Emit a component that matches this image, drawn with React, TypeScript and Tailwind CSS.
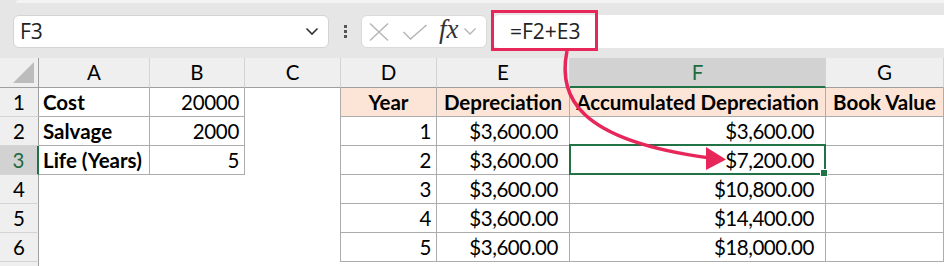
import React from 'react';

const COLS = ['A', 'B', 'C', 'D', 'E', 'F', 'G'];

type Cell = { text?: string; cls?: string };

const cellFont = { fontFamily: 'Lato, "Open Sans", sans-serif' };

function Toolbar() {
  return (
    <div className="relative h-[58px] bg-[#e6e6e6] flex items-start pt-[15px]">
      <div className="absolute left-[16px] right-0 top-0 h-[3px] rounded-tl-[6px] bg-[#f3f3f3]" />
      <div className="ml-[13px] w-[316px] h-[33px] rounded-[6px] bg-white border border-[#d4d4d4] flex items-center pl-[6px] pr-[8px]">
        <span className="flex-1 text-[21px] text-[#222]" style={{ fontFamily: '"Open Sans", "Noto Sans", sans-serif' }}>F3</span>
        <svg width="14" height="9" viewBox="0 0 14 9" className="mr-[1px]">
          <path d="M1.5 1.5 L7 7 L12.5 1.5" fill="none" stroke="#333" strokeWidth="1.6" />
        </svg>
      </div>
      <div className="w-[32px] h-[33px] flex flex-col items-center justify-center gap-[2px]">
        <span className="w-[3px] h-[3px] bg-[#555]" />
        <span className="w-[3px] h-[3px] bg-[#555]" />
        <span className="w-[3px] h-[3px] bg-[#555]" />
      </div>
      <div className="w-[126px] h-[33px] rounded-[6px] bg-white border border-[#dadada] flex items-center pl-[6px]">
        <svg width="22" height="20" viewBox="0 0 22 20">
          <path d="M2 1.5 L20 18.5 M20 1.5 L2 18.5" stroke="#b4b4b4" strokeWidth="1.4" fill="none" />
        </svg>
        <svg width="26" height="16" viewBox="0 0 26 16" className="ml-[12px]">
          <path d="M1.5 8 L8.5 15 L24.5 1" stroke="#b4b4b4" strokeWidth="1.4" fill="none" />
        </svg>
        <span className="ml-[11px] text-[27px] italic text-[#333] leading-none -mt-[4px]" style={{ fontFamily: '"Liberation Serif", serif' }}>fx</span>
        <svg width="14" height="9" viewBox="0 0 14 9" className="ml-[4px]">
          <path d="M1.5 1.5 L7 7 L12.5 1.5" fill="none" stroke="#b4b4b4" strokeWidth="1.4" />
        </svg>
      </div>
      <div className="ml-[6px] flex-1 h-[33px] rounded-l-[6px] bg-white flex items-center pl-[17px]">
        <span className="text-[21px] text-[#222]" style={{ fontFamily: '"Open Sans", "Noto Sans", sans-serif' }}>=F2+E3</span>
      </div>
    </div>
  );
}

const B = 'border-[#acacac]';

function buildRows(): Cell[][] {
  const tb = `border-r border-b ${B}`;
  const hdr = `${tb} bg-[#fce4d6] font-bold justify-center`;
  const num = `${tb} justify-end pr-[5px] tracking-[-0.3px]`;
  const cur = `${tb} justify-end pr-[11px] tracking-[-0.45px]`;
  const cLeft = `border-r ${B}`;
  const rows: Cell[][] = [
    [
      { text: 'Cost', cls: `${tb} font-bold pl-[4px]` },
      { text: '20000', cls: num },
      { cls: cLeft },
      { text: 'Year', cls: hdr },
      { text: 'Depreciation', cls: hdr },
      { text: 'Accumulated Depreciation', cls: hdr },
      { text: 'Book Value', cls: hdr },
    ],
    [
      { text: 'Salvage', cls: `${tb} font-bold pl-[4px]` },
      { text: '2000', cls: num },
      { cls: cLeft },
      { text: '1', cls: num },
      { text: '$3,600.00', cls: cur },
      { text: '$3,600.00', cls: cur },
      { cls: tb },
    ],
    [
      { text: 'Life (Years)', cls: `${tb} font-bold pl-[4px]` },
      { text: '5', cls: num },
      { cls: cLeft },
      { text: '2', cls: num },
      { text: '$3,600.00', cls: cur },
      { text: '$7,200.00', cls: `${cur} relative` },
      { cls: tb },
    ],
  ];
  const rest = [
    ['3', '$10,800.00'],
    ['4', '$14,400.00'],
    ['5', '$18,000.00'],
  ];
  rest.forEach(([y, acc]) => {
    rows.push([
      {},
      {},
      { cls: cLeft },
      { text: y, cls: num },
      { text: '$3,600.00', cls: cur },
      { text: acc, cls: cur },
      { cls: tb },
    ]);
  });
  return rows;
}

function Sheet() {
  const rows = buildRows();
  return (
    <div
      className="grid grid-cols-[39px_111px_95px_96px_96px_133px_256px_118px] text-[20.5px] text-black"
      style={cellFont}
    >
      {/* header row */}
      <div className="h-[30px] bg-[#efefef] border-r border-b border-[#9e9e9e] relative">
        <svg width="22" height="22" viewBox="0 0 22 22" className="absolute right-[3px] bottom-[3px]">
          <path d="M21 0 L21 21 L0 21 Z" fill="#bcbcbc" />
        </svg>
      </div>
      {COLS.map((c) =>
        c === 'F' ? (
          <div
            key={c}
            className="h-[30px] bg-[#d2d2d2] border-r border-[#d4d4d4] border-b-2 border-b-[#217346] flex items-center justify-center text-[#1e6b41]"
          >
            {c}
          </div>
        ) : (
          <div
            key={c}
            className="h-[30px] bg-[#efefef] border-r border-[#d4d4d4] border-b border-b-[#9e9e9e] flex items-center justify-center"
          >
            {c}
          </div>
        )
      )}
      {rows.map((r, i) => (
        <React.Fragment key={i}>
          {i === 2 ? (
            <div className="h-[29px] bg-[#d2d2d2] border-b border-[#d4d4d4] border-r-2 border-r-[#217346] flex items-center justify-center text-[#1e6b41]">
              {i + 1}
            </div>
          ) : (
            <div className="h-[29px] bg-[#efefef] border-b border-[#d4d4d4] border-r border-r-[#9e9e9e] flex items-center justify-center">
              {i + 1}
            </div>
          )}
          {r.map((cell, j) => (
            <div key={j} className={`h-[29px] flex items-center whitespace-nowrap overflow-visible ${cell.cls ?? ''}`}>
              {cell.text}
              {i === 2 && j === 5 && (
                <>
                  <div className="absolute -left-[1px] -top-[2px] -right-px -bottom-px border-2 border-[#217346]" />
                  <div className="absolute -right-[3px] -bottom-[3px] w-[6px] h-[6px] bg-[#217346] border border-white box-content" />
                </>
              )}
            </div>
          ))}
        </React.Fragment>
      ))}
      <div className="h-[5px] bg-[#efefef] border-r border-[#9e9e9e]" />
      <div className="col-span-7 h-[5px] bg-white" />
    </div>
  );
}

export default function App() {
  return (
    <div className="relative w-[944px] h-[266px] overflow-hidden bg-white">
      <Toolbar />
      <Sheet />
      {/* annotation */}
      <div className="absolute left-[491px] top-[10px] w-[107px] h-[41px] border-[3px] border-[#e7265a]" />
      <svg className="absolute left-0 top-0 pointer-events-none" width="944" height="266" viewBox="0 0 944 266">
        <path d="M567 51 C 558 95, 575 140, 710 158" fill="none" stroke="#e7265a" strokeWidth="3.5" />
        <path d="M706 147 L726 159.5 L706 170 Z" fill="#e7265a" />
      </svg>
    </div>
  );
}
